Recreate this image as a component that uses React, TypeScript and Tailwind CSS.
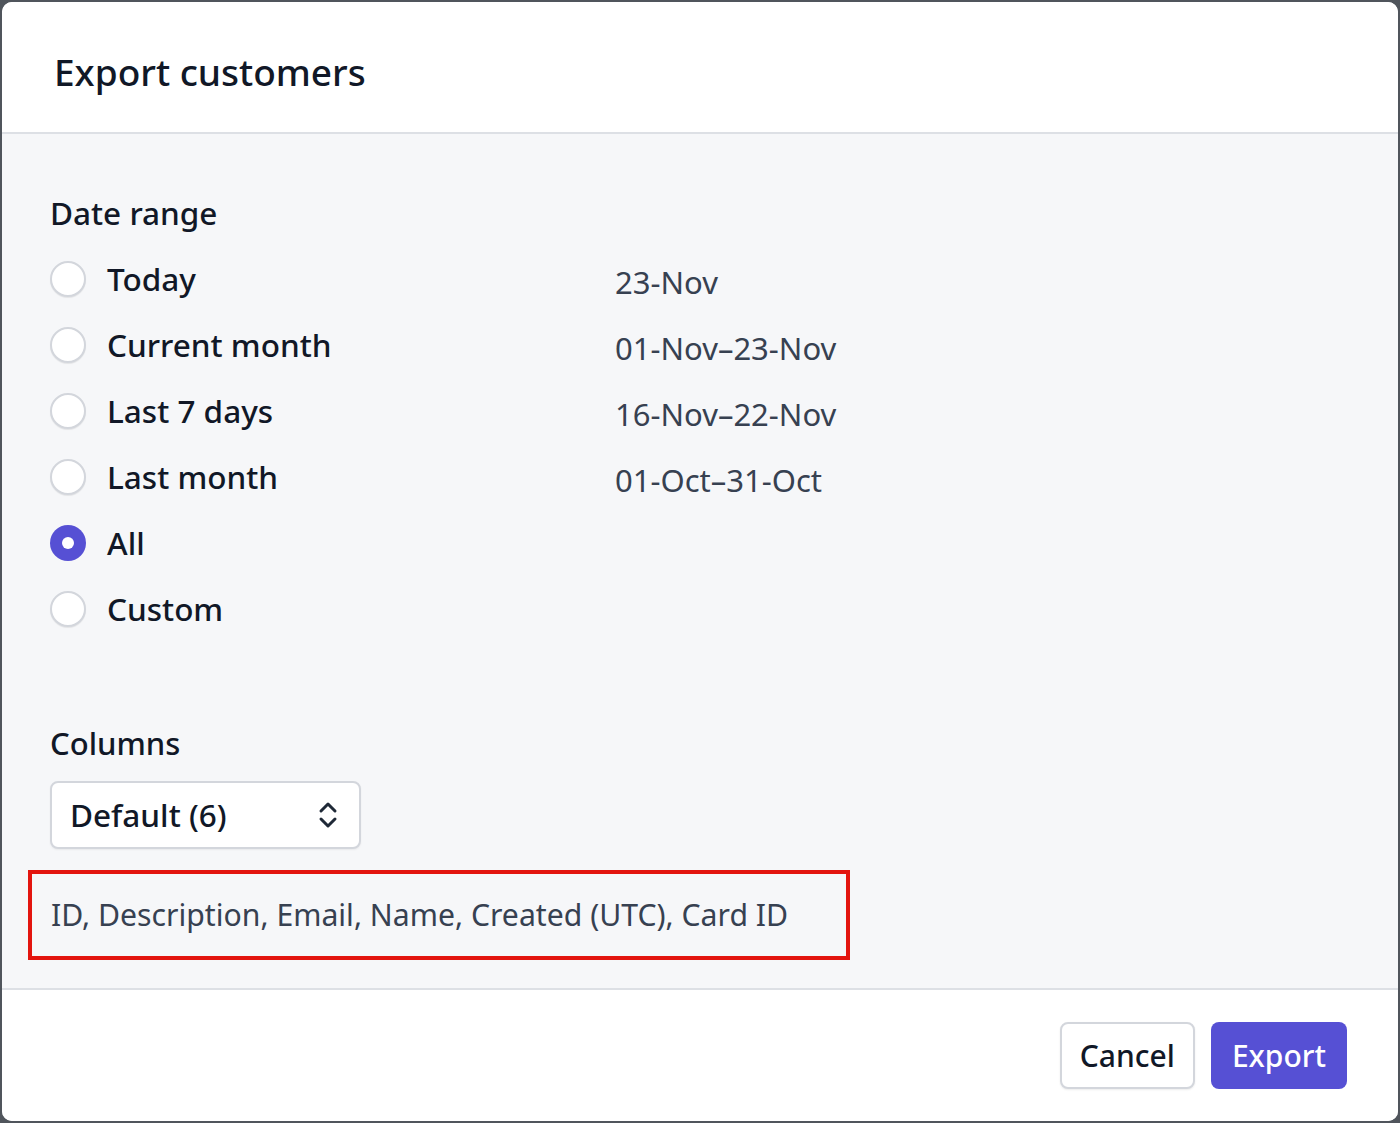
import React from "react";

const options = [
  { label: "Today", range: "23-Nov" },
  { label: "Current month", range: "01-Nov–23-Nov" },
  { label: "Last 7 days", range: "16-Nov–22-Nov" },
  { label: "Last month", range: "01-Oct–31-Oct" },
  { label: "All", range: "", checked: true },
  { label: "Custom", range: "" },
];

function Radio({ checked }: { checked?: boolean }) {
  if (checked) {
    return (
      <span className="flex h-[36px] w-[36px] shrink-0 items-center justify-center rounded-full bg-[#5650d4]">
        <span className="h-[12px] w-[12px] rounded-full bg-white" />
      </span>
    );
  }
  return (
    <span className="h-[36px] w-[36px] shrink-0 rounded-full border-2 border-[#d3d6dc] bg-white shadow-[0_1px_1px_rgba(0,0,0,0.08)]" />
  );
}

export default function App() {
  return (
    <div
      className="h-[1123px] w-[1400px] bg-[#50555c] p-[2px]"
      style={{ fontFamily: '"Noto Sans", "Open Sans", sans-serif' }}
    >
      <div className="flex h-full w-full flex-col overflow-hidden rounded-[10px] bg-[#f6f7f9]">
        <header className="flex h-[132px] shrink-0 items-center border-b-2 border-[#dde0e5] bg-white pl-[52px] pt-[10px]">
          <h1 className="text-[37px] font-medium text-[#111827]">Export customers</h1>
        </header>

        <main className="flex flex-1 flex-col pl-[48px] pt-[55px]">
          <h2 className="text-[31.5px] font-medium leading-[48px] text-[#111827]">Date range</h2>
          <div className="mt-[9px] flex flex-col">
            {options.map((o) => (
              <div key={o.label} className="flex h-[66px] items-center">
                <Radio checked={o.checked} />
                <span className="ml-[21px] w-[508px] text-[31.5px] font-medium text-[#111827]">{o.label}</span>
                <span className="mt-[7px] text-[31px] text-[#374151]">{o.range}</span>
              </div>
            ))}
          </div>

          <h2 className="mt-[77px] text-[31px] font-medium leading-[48px] text-[#111827]">Columns</h2>
          <button className="mt-[14px] flex h-[68px] w-[311px] items-center justify-between rounded-[8px] border-2 border-[#d3d6dc] bg-white pl-[18px] pr-[20px] shadow-[0_1px_2px_rgba(0,0,0,0.06)]">
            <span className="text-[31.5px] font-medium text-[#111827]">Default (6)</span>
            <svg width="22" height="30" viewBox="0 0 22 30" fill="none" stroke="#1f2937" strokeWidth="3" strokeLinecap="round" strokeLinejoin="round">
              <path d="M4 11 L11 4 L18 11" />
              <path d="M4 19 L11 26 L18 19" />
            </svg>
          </button>

          <div className="-ml-[22px] mt-[21px] flex h-[90px] w-[822px] items-center border-4 border-[#e3150f] pl-[19px]">
            <span className="text-[30.2px] text-[#374151]">ID, Description, Email, Name, Created (UTC), Card ID</span>
          </div>
        </main>

        <footer className="flex h-[133px] shrink-0 items-center justify-end gap-[16px] border-t-2 border-[#dde0e5] bg-white pr-[51px]">
          <button className="h-[67px] rounded-[8px] border-2 border-[#d3d6dc] bg-white px-[18px] text-[30px] font-medium text-[#111827] shadow-[0_1px_2px_rgba(0,0,0,0.08)]">
            Cancel
          </button>
          <button className="h-[67px] rounded-[8px] bg-[#5650d4] px-[21px] text-[30px] font-medium text-white">
            Export
          </button>
        </footer>
      </div>
    </div>
  );
}
